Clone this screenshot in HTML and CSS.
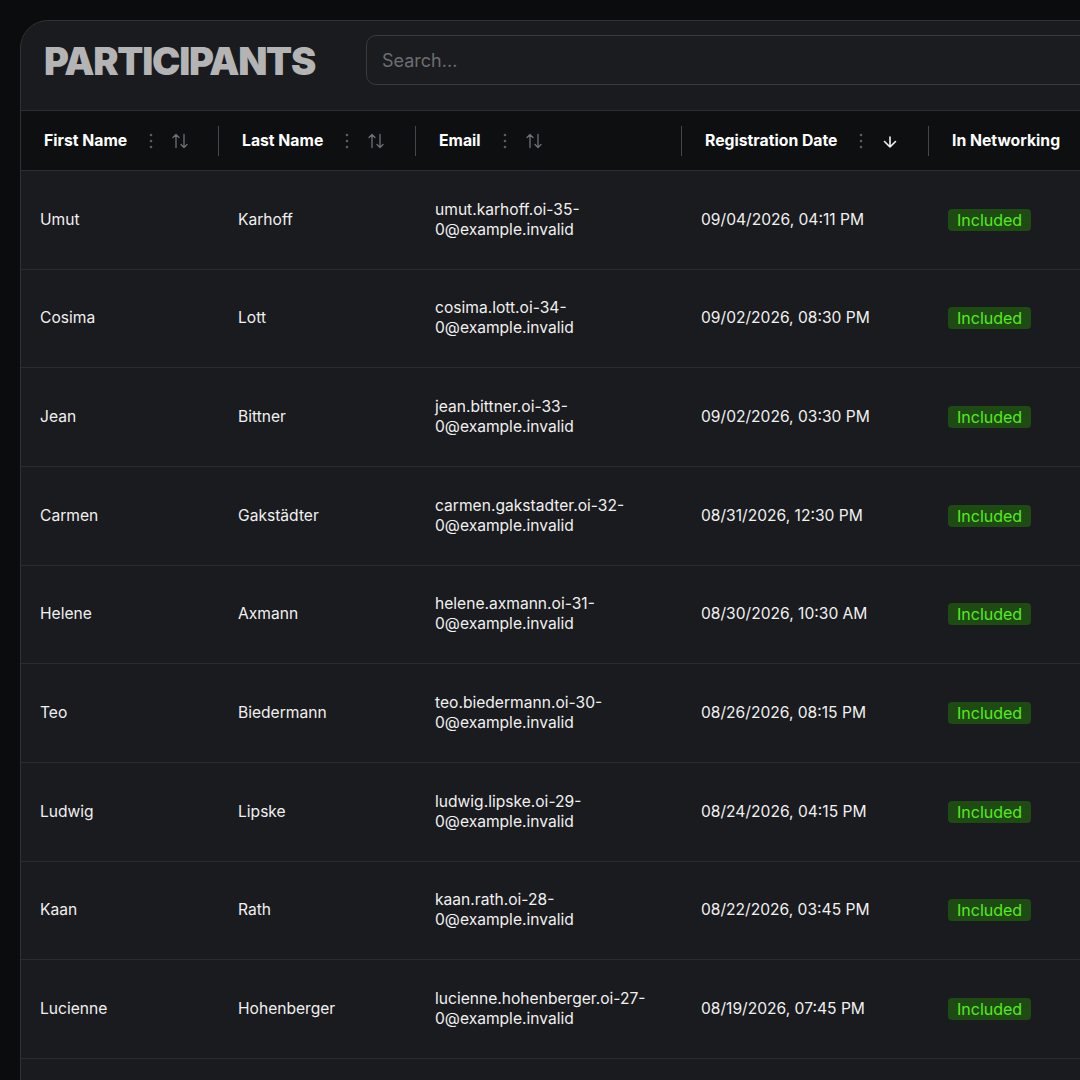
FILE: index.html
```html
<!DOCTYPE html>
<html lang="en">
<head>
<meta charset="utf-8">
<title>Participants</title>
<link rel="stylesheet" href="styles.css">
</head>
<body>
<div class="card">
  <div class="card-head">
    <h1 class="title">PARTICIPANTS</h1>
    <div class="search"><span class="placeholder">Search...</span></div>
  </div>
  <div class="table">
    <div class="row head">
      <div class="th"><span class="label">First Name</span>
        <svg class="kebab" width="16" height="18" viewBox="0 0 16 18"><circle cx="8" cy="3" r="1.3"/><circle cx="8" cy="9" r="1.3"/><circle cx="8" cy="15" r="1.3"/></svg>
        <svg class="sort" width="16" height="16" viewBox="0 0 16 16"><path d="M4 1.5V14.5M1 4.5L4 1.5L7 4.5M12 1.5V14.5M9 11.5L12 14.5L15 11.5"/></svg>
      </div>
      <div class="th sep"><span class="label">Last Name</span>
        <svg class="kebab" width="16" height="18" viewBox="0 0 16 18"><circle cx="8" cy="3" r="1.3"/><circle cx="8" cy="9" r="1.3"/><circle cx="8" cy="15" r="1.3"/></svg>
        <svg class="sort" width="16" height="16" viewBox="0 0 16 16"><path d="M4 1.5V14.5M1 4.5L4 1.5L7 4.5M12 1.5V14.5M9 11.5L12 14.5L15 11.5"/></svg>
      </div>
      <div class="th sep"><span class="label">Email</span>
        <svg class="kebab" width="16" height="18" viewBox="0 0 16 18"><circle cx="8" cy="3" r="1.3"/><circle cx="8" cy="9" r="1.3"/><circle cx="8" cy="15" r="1.3"/></svg>
        <svg class="sort" width="16" height="16" viewBox="0 0 16 16"><path d="M4 1.5V14.5M1 4.5L4 1.5L7 4.5M12 1.5V14.5M9 11.5L12 14.5L15 11.5"/></svg>
      </div>
      <div class="th sep"><span class="label">Registration Date</span>
        <svg class="kebab" width="16" height="18" viewBox="0 0 16 18"><circle cx="8" cy="3" r="1.3"/><circle cx="8" cy="9" r="1.3"/><circle cx="8" cy="15" r="1.3"/></svg>
        <svg class="sort active" width="16" height="16" viewBox="0 0 16 16"><path d="M8 4V14M2.5 8.5L8 14L13.5 8.5"/></svg>
      </div>
      <div class="th sep"><span class="label">In Networking</span></div>
    </div>

    <div class="row"><div class="td">Umut</div><div class="td">Karhoff</div><div class="td email">umut.karhoff.oi-35-0@example.invalid</div><div class="td">09/04/2026, 04:11 PM</div><div class="td"><span class="badge">Included</span></div></div>
    <div class="row"><div class="td">Cosima</div><div class="td">Lott</div><div class="td email">cosima.lott.oi-34-0@example.invalid</div><div class="td">09/02/2026, 08:30 PM</div><div class="td"><span class="badge">Included</span></div></div>
    <div class="row"><div class="td">Jean</div><div class="td">Bittner</div><div class="td email">jean.bittner.oi-33-0@example.invalid</div><div class="td">09/02/2026, 03:30 PM</div><div class="td"><span class="badge">Included</span></div></div>
    <div class="row"><div class="td">Carmen</div><div class="td">Gakstädter</div><div class="td email">carmen.gakstadter.oi-32-0@example.invalid</div><div class="td">08/31/2026, 12:30 PM</div><div class="td"><span class="badge">Included</span></div></div>
    <div class="row"><div class="td">Helene</div><div class="td">Axmann</div><div class="td email">helene.axmann.oi-31-0@example.invalid</div><div class="td">08/30/2026, 10:30 AM</div><div class="td"><span class="badge">Included</span></div></div>
    <div class="row"><div class="td">Teo</div><div class="td">Biedermann</div><div class="td email">teo.biedermann.oi-30-0@example.invalid</div><div class="td">08/26/2026, 08:15 PM</div><div class="td"><span class="badge">Included</span></div></div>
    <div class="row"><div class="td">Ludwig</div><div class="td">Lipske</div><div class="td email">ludwig.lipske.oi-29-0@example.invalid</div><div class="td">08/24/2026, 04:15 PM</div><div class="td"><span class="badge">Included</span></div></div>
    <div class="row"><div class="td">Kaan</div><div class="td">Rath</div><div class="td email">kaan.rath.oi-28-0@example.invalid</div><div class="td">08/22/2026, 03:45 PM</div><div class="td"><span class="badge">Included</span></div></div>
    <div class="row"><div class="td">Lucienne</div><div class="td">Hohenberger</div><div class="td email">lucienne.hohenberger.oi-27-0@example.invalid</div><div class="td">08/19/2026, 07:45 PM</div><div class="td"><span class="badge">Included</span></div></div>
    <div class="row"><div class="td">&nbsp;</div></div>
  </div>
</div>
</body>
</html>
```

FILE: styles.css
```css
* { box-sizing: border-box; }
html, body {
  margin: 0;
  padding: 0;
  background: #0b0c0e;
  overflow: hidden;
  height: 1080px;
}
body {
  font-family: Inter, "Noto Sans", "Liberation Sans", sans-serif;
  color: #ededed;
  padding: 20px 0 0 20px;
}
.card {
  width: 1240px;
  background: #1a1b1e;
  border: 1px solid #2f3134;
  border-radius: 28px 0 0 0;
  overflow: hidden;
}
.card-head {
  display: flex;
  align-items: center;
  height: 90px;
  padding: 14px 0 25px 23px;
  border-bottom: 1px solid #2c2e31;
}
.title {
  margin: 0;
  font-size: 38px;
  font-weight: 900;
  line-height: 1;
  color: #b4b4b4;
  letter-spacing: -1.25px;
  padding-top: 2px;
}
.search {
  margin-left: 51px;
  flex: 1;
  height: 50px;
  border: 1px solid #393b3f;
  border-radius: 10px;
  background: #1b1c1f;
  display: flex;
  align-items: center;
  padding-left: 15px;
}
.placeholder {
  font-size: 18px;
  color: #6c6e72;
}
.row {
  display: grid;
  grid-template-columns: 197px 197px 266px 247px 1fr;
  height: 98.67px;
  border-bottom: 1px solid #2a2c2f;
  align-items: center;
}
.row.head {
  height: 60px;
  background: #0e0f11;
  border-bottom: 1px solid #2c2e31;
}
.th {
  position: relative;
  display: flex;
  align-items: center;
  height: 100%;
  padding-left: 24px;
  font-size: 15.75px;
  font-weight: 700;
  color: #ffffff;
}
.th:first-child { padding-left: 23px; }
.th.sep::before {
  content: "";
  position: absolute;
  left: 0;
  top: 15px;
  height: 30px;
  width: 1px;
  background: #45474b;
}
.kebab {
  margin-left: 16px;
  fill: #5b5d61;
}
.sort {
  margin-left: 13px;
  fill: none;
  stroke: #6f7175;
  stroke-width: 1.3;
  stroke-linecap: round;
  stroke-linejoin: round;
}
.sort.active {
  stroke: #f2f2f2;
  stroke-width: 1.6;
}
.td {
  padding: 0 20px;
  font-size: 15.6px;
  line-height: 20px;
  color: #f0f0f0;
}
.td:first-child { padding-left: 19px; }
.badge {
  display: inline-block;
  padding: 1px 9px;
  line-height: 20px;
  font-size: 16px;
  color: #55ec1f;
  background: #1e4a13;
  border-radius: 4px;
}
```
